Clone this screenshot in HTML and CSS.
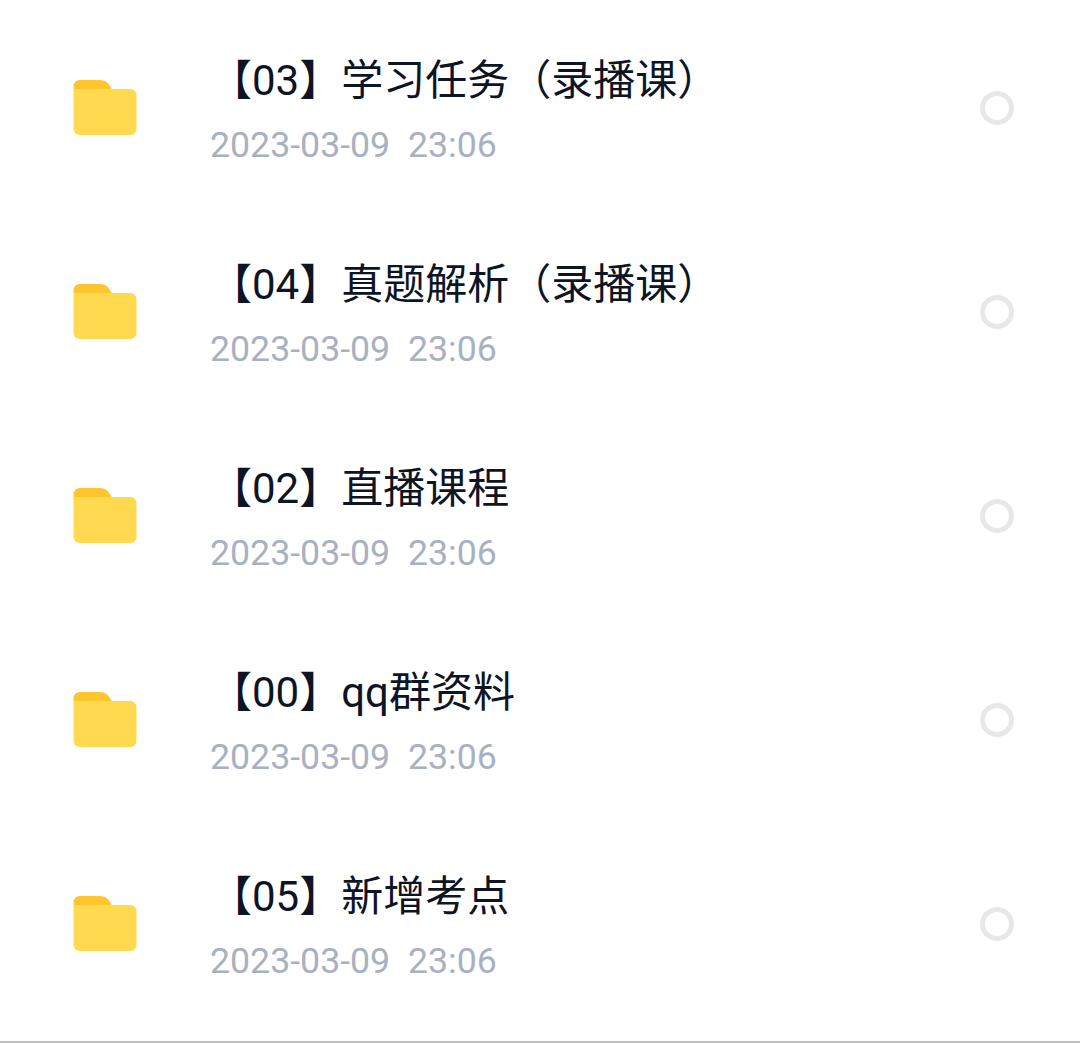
FILE: index.html
```html
<!DOCTYPE html>
<html lang="zh-CN">
<head>
<meta charset="utf-8">
<title>文件列表</title>
<link rel="stylesheet" href="styles.css">
</head>
<body>
<main class="list">
  <div class="row">
    <svg class="folder" viewBox="0 0 63 55"><path class="back" d="M6 0h20c4 0 7 1.500 9 4l4 6H0V6a6 6 0 0 1 6-6z"/><path class="front" d="M0 9h57a6 6 0 0 1 6 6v34a6 6 0 0 1-6 6H6a6 6 0 0 1-6-6z"/></svg>
    <div class="info"><div class="title">【03】学习任务（录播课）</div><div class="date">2023-03-09&nbsp; 23:06</div></div>
    <span class="radio"></span>
  </div>
  <div class="row">
    <svg class="folder" viewBox="0 0 63 55"><path class="back" d="M6 0h20c4 0 7 1.500 9 4l4 6H0V6a6 6 0 0 1 6-6z"/><path class="front" d="M0 9h57a6 6 0 0 1 6 6v34a6 6 0 0 1-6 6H6a6 6 0 0 1-6-6z"/></svg>
    <div class="info"><div class="title">【04】真题解析（录播课）</div><div class="date">2023-03-09&nbsp; 23:06</div></div>
    <span class="radio"></span>
  </div>
  <div class="row">
    <svg class="folder" viewBox="0 0 63 55"><path class="back" d="M6 0h20c4 0 7 1.500 9 4l4 6H0V6a6 6 0 0 1 6-6z"/><path class="front" d="M0 9h57a6 6 0 0 1 6 6v34a6 6 0 0 1-6 6H6a6 6 0 0 1-6-6z"/></svg>
    <div class="info"><div class="title">【02】直播课程</div><div class="date">2023-03-09&nbsp; 23:06</div></div>
    <span class="radio"></span>
  </div>
  <div class="row">
    <svg class="folder" viewBox="0 0 63 55"><path class="back" d="M6 0h20c4 0 7 1.500 9 4l4 6H0V6a6 6 0 0 1 6-6z"/><path class="front" d="M0 9h57a6 6 0 0 1 6 6v34a6 6 0 0 1-6 6H6a6 6 0 0 1-6-6z"/></svg>
    <div class="info"><div class="title">【00】qq群资料</div><div class="date">2023-03-09&nbsp; 23:06</div></div>
    <span class="radio"></span>
  </div>
  <div class="row">
    <svg class="folder" viewBox="0 0 63 55"><path class="back" d="M6 0h20c4 0 7 1.500 9 4l4 6H0V6a6 6 0 0 1 6-6z"/><path class="front" d="M0 9h57a6 6 0 0 1 6 6v34a6 6 0 0 1-6 6H6a6 6 0 0 1-6-6z"/></svg>
    <div class="info"><div class="title">【05】新增考点</div><div class="date">2023-03-09&nbsp; 23:06</div></div>
    <span class="radio"></span>
  </div>
</main>
<div class="rule"></div>
</body>
</html>
```
FILE: styles.css
```css
html, body {
  margin: 0;
  padding: 0;
  background: #fff;
}
body {
  height: 1043px;
  overflow: hidden;
  display: flex;
  flex-direction: column;
  font-family: Roboto, "Noto Sans CJK SC", sans-serif;
}
.list {
  flex: 1;
  padding-top: 6px;
}
.row {
  height: 204px;
  display: flex;
  align-items: center;
  padding: 0 66px 0 73px;
}
.folder {
  width: 64px;
  height: 55px;
  flex: none;
  margin-top: -1px;
}
.back { fill: #fec52e; }
.front { fill: #ffd94f; }
.info {
  flex: 1;
  margin-left: 73px;
  padding-top: 4px;
}
.title {
  font-size: 42px;
  line-height: 56px;
  color: #0d1424;
  white-space: nowrap;
  margin-top: -1px;
}
.date {
  font-size: 35.7px;
  line-height: 42px;
  margin-top: 15px;
  color: #a9b1c0;
  white-space: nowrap;
}
.radio {
  width: 34px;
  height: 34px;
  box-sizing: border-box;
  border: 5px solid #e8e8e8;
  border-radius: 50%;
  flex: none;
}
.rule {
  height: 2px;
  background: #bdbdbd;
  flex: none;
}
```
